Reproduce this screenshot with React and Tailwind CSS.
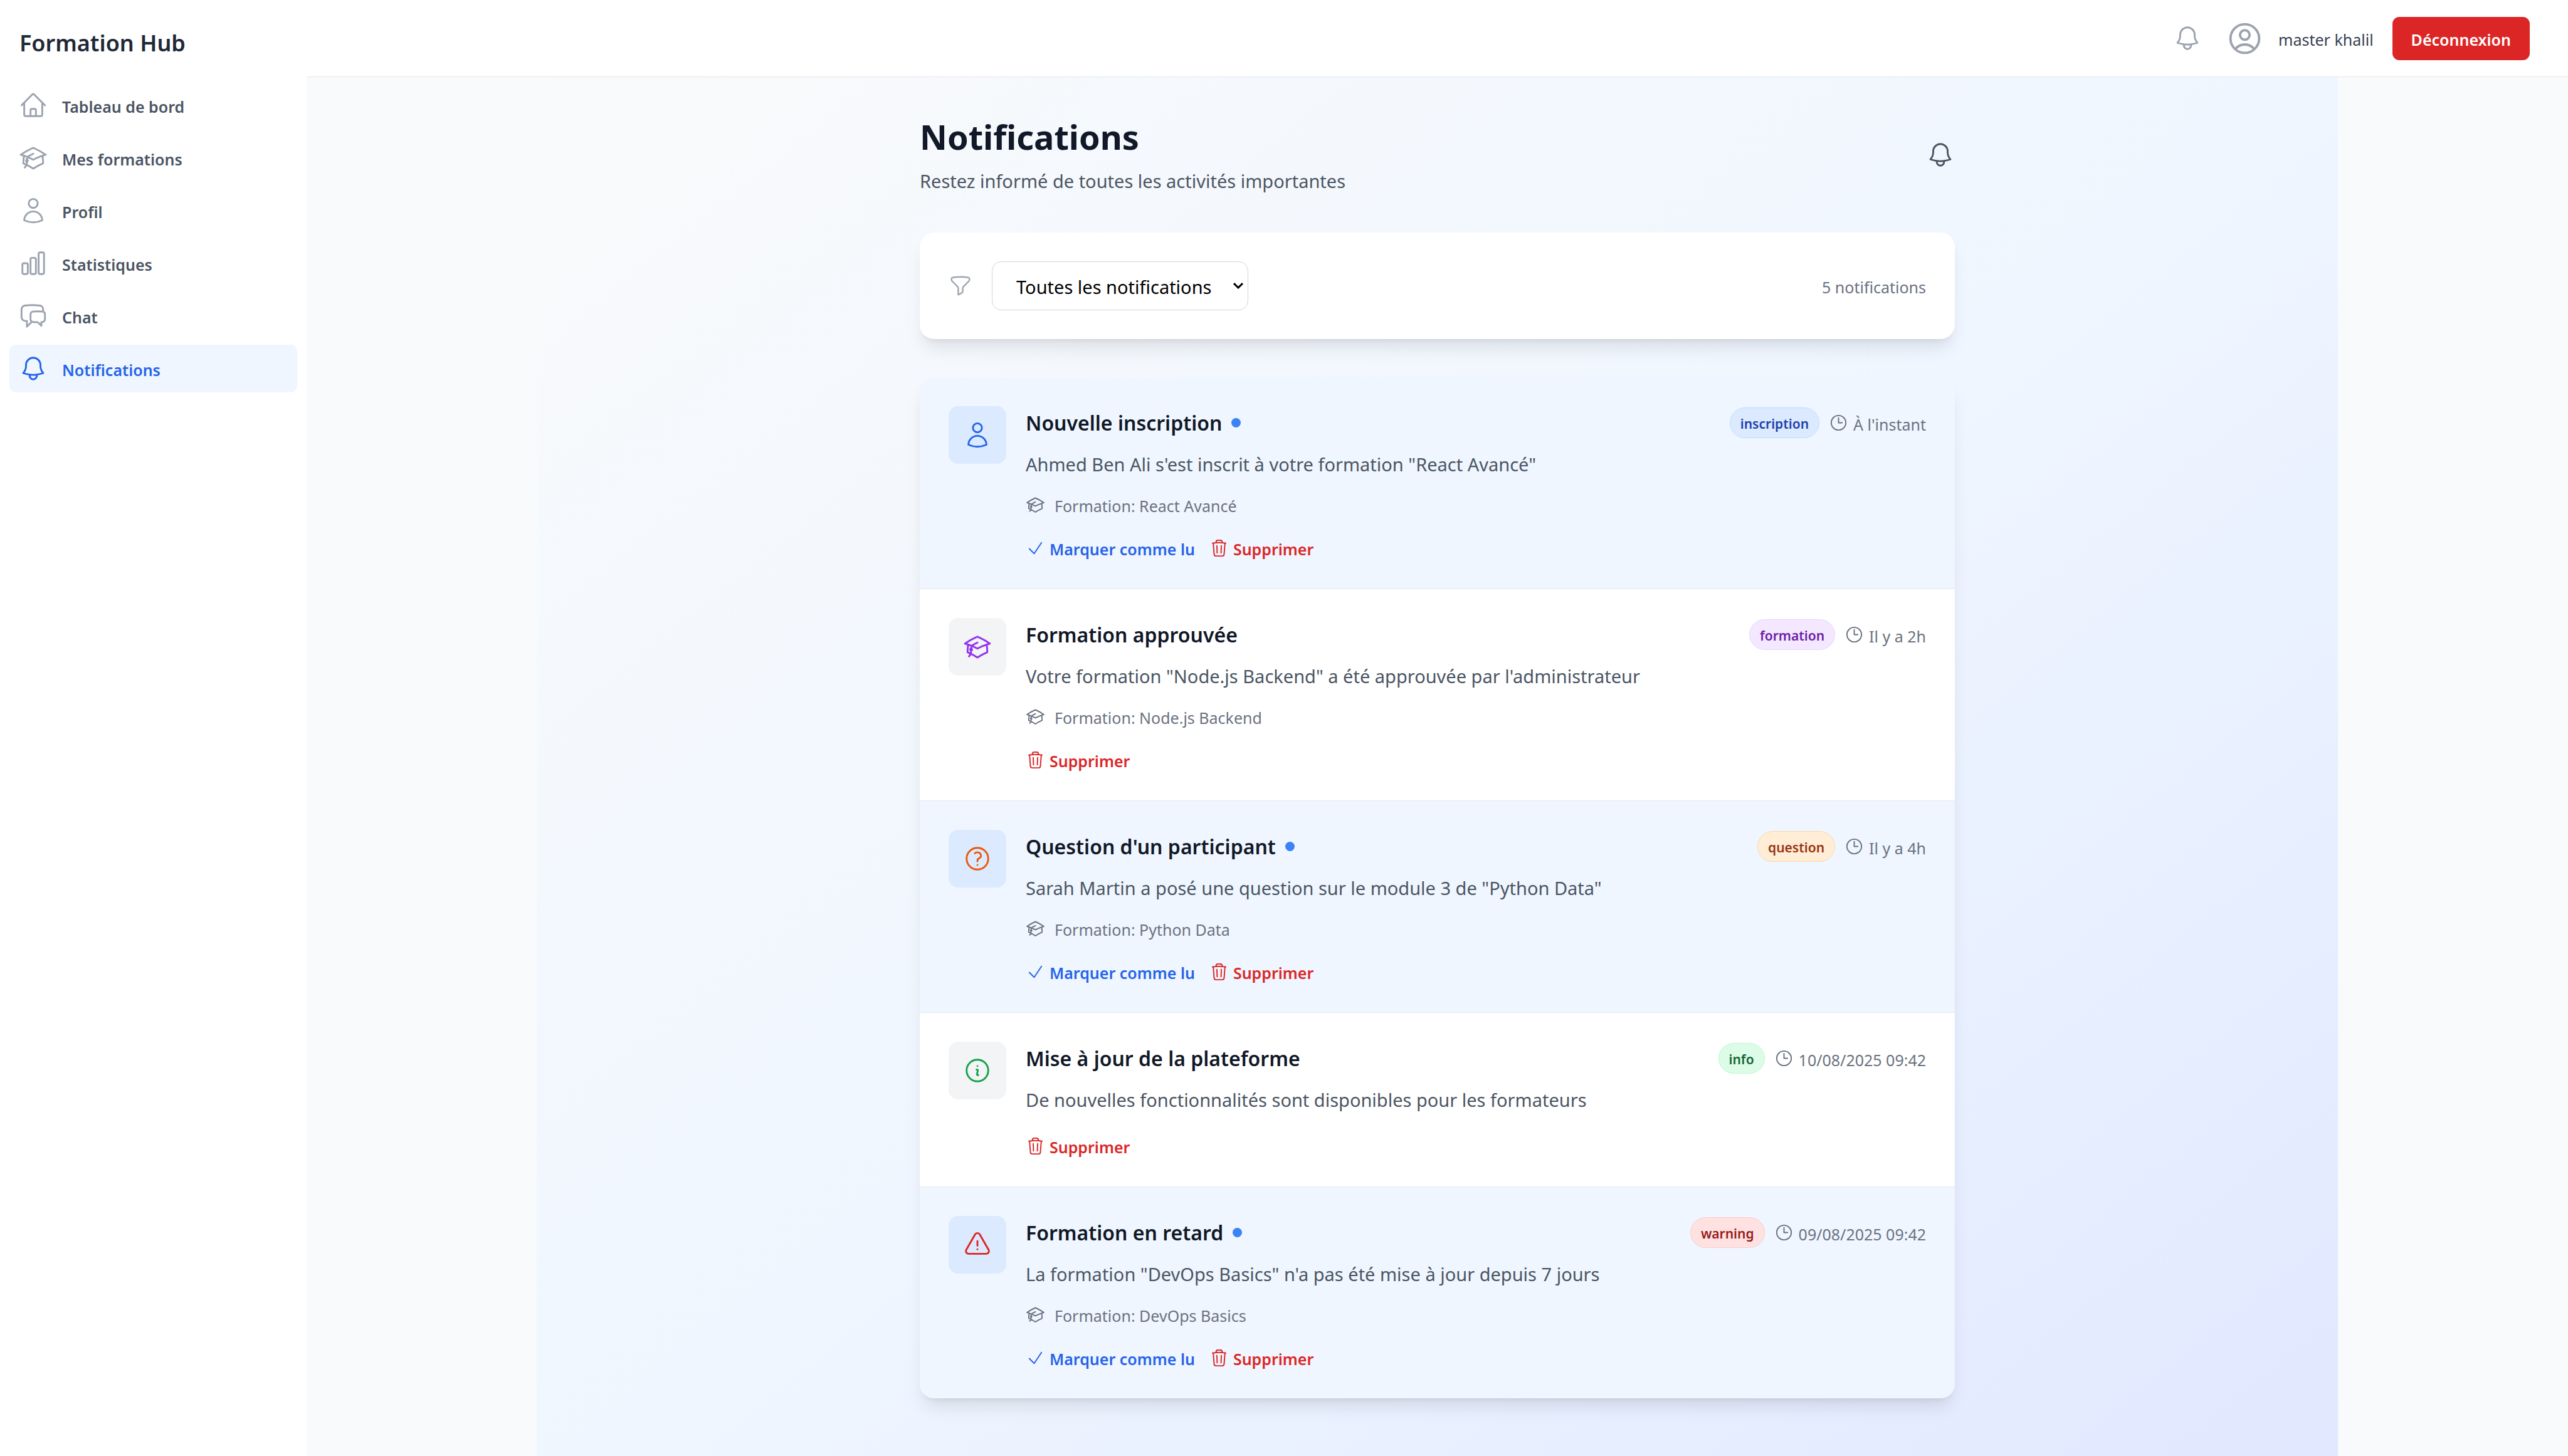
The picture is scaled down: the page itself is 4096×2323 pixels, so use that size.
import { useState } from "react";
import {
  HiOutlineHome,
  HiOutlineAcademicCap,
  HiOutlineUser,
  HiOutlineChartBar,
  HiOutlineChatBubbleLeftRight,
  HiOutlineBell,
  HiOutlineUserCircle,
  HiOutlineFunnel,
  HiOutlineClock,
  HiOutlineCheck,
  HiOutlineTrash,
  HiOutlineQuestionMarkCircle,
  HiOutlineInformationCircle,
  HiOutlineExclamationTriangle,
} from "react-icons/hi2";

const NAV = [
  { label: "Tableau de bord", Icon: HiOutlineHome },
  { label: "Mes formations", Icon: HiOutlineAcademicCap },
  { label: "Profil", Icon: HiOutlineUser },
  { label: "Statistiques", Icon: HiOutlineChartBar },
  { label: "Chat", Icon: HiOutlineChatBubbleLeftRight },
  { label: "Notifications", Icon: HiOutlineBell, active: true },
];

const ITEMS = [
  {
    title: "Nouvelle inscription",
    message: 'Ahmed Ben Ali s\'est inscrit à votre formation "React Avancé"',
    formation: "React Avancé",
    type: "inscription",
    badge: "bg-[#dbeafe] border-[#bfdbfe] text-[#1e40af]",
    time: "À l'instant",
    unread: true,
    Icon: HiOutlineUser,
    color: "text-[#2563eb]",
  },
  {
    title: "Formation approuvée",
    message: 'Votre formation "Node.js Backend" a été approuvée par l\'administrateur',
    formation: "Node.js Backend",
    type: "formation",
    badge: "bg-[#f3e8ff] border-[#e9d5ff] text-[#6b21a8]",
    time: "Il y a 2h",
    unread: false,
    Icon: HiOutlineAcademicCap,
    color: "text-[#9333ea]",
  },
  {
    title: "Question d'un participant",
    message: 'Sarah Martin a posé une question sur le module 3 de "Python Data"',
    formation: "Python Data",
    type: "question",
    badge: "bg-[#ffedd5] border-[#fed7aa] text-[#9a3412]",
    time: "Il y a 4h",
    unread: true,
    Icon: HiOutlineQuestionMarkCircle,
    color: "text-[#ea580c]",
  },
  {
    title: "Mise à jour de la plateforme",
    message: "De nouvelles fonctionnalités sont disponibles pour les formateurs",
    formation: null,
    type: "info",
    badge: "bg-[#dcfce7] border-[#bbf7d0] text-[#166534]",
    time: "10/08/2025 09:42",
    unread: false,
    Icon: HiOutlineInformationCircle,
    color: "text-[#16a34a]",
  },
  {
    title: "Formation en retard",
    message: 'La formation "DevOps Basics" n\'a pas été mise à jour depuis 7 jours',
    formation: "DevOps Basics",
    type: "warning",
    badge: "bg-[#fee2e2] border-[#fecaca] text-[#991b1b]",
    time: "09/08/2025 09:42",
    unread: true,
    Icon: HiOutlineExclamationTriangle,
    color: "text-[#dc2626]",
  },
];

const CARD_SHADOW = "shadow-[0_19px_29px_-6px_rgba(0,0,0,0.1),0_8px_11px_-8px_rgba(0,0,0,0.1)]";

/* Small text that stands beside an icon or inside a control. */
function Label({ children, className = "" }) {
  return <span className={`block pt-1 text-[25px] leading-[34px] ${className}`}>{children}</span>;
}

function Sidebar() {
  return (
    <aside className="w-[489px] shrink-0 bg-white">
      <div className="flex h-[130px] items-center px-[31px] pt-2">
        <span className="text-[36px] leading-[50px] font-semibold text-[#1f2937]">Formation Hub</span>
      </div>
      <nav className="flex flex-col gap-2 px-[15px]">
        {NAV.map(({ label, Icon, active }) => (
          <a
            key={label}
            href="#"
            className={`flex h-[76px] items-center gap-[23px] rounded-[11px] px-[15px] font-semibold ${
              active ? "bg-[#eff6ff] text-[#2563eb]" : "text-[#4b5563]"
            }`}
          >
            <Icon className={`size-[46px] shrink-0 ${active ? "text-[#2563eb]" : "text-[#9ca3af]"}`} />
            <Label>{label}</Label>
          </a>
        ))}
      </nav>
    </aside>
  );
}

function Header() {
  return (
    <header className="flex h-[123px] shrink-0 items-center justify-end border-b border-[#e5e7eb] bg-white pr-[61px]">
      <button type="button" aria-label="Notifications" className="mr-[38px] text-[#9ca3af]">
        <HiOutlineBell className="size-[46px]" />
      </button>
      <HiOutlineUserCircle className="mr-[23px] size-[61px] text-[#9ca3af]" />
      <Label className="mr-[30px] text-[#374151]">master khalil</Label>
      <button type="button" className="h-[69px] rounded-[11px] bg-[#dc2626] px-[30px] font-semibold text-white">
        <Label>Déconnexion</Label>
      </button>
    </header>
  );
}

function FilterCard() {
  const [filter, setFilter] = useState("all");
  return (
    <section className={`flex items-center justify-between rounded-[23px] bg-white p-[46px] ${CARD_SHADOW}`}>
      <div className="flex items-center gap-[31px]">
        <HiOutlineFunnel className="size-[38px] text-[#9ca3af]" />
        <div className="relative">
          <select
            aria-label="Filtrer les notifications"
            value={filter}
            onChange={(e) => setFilter(e.target.value)}
            className="h-[78px] w-[409px] appearance-none rounded-[15px] border border-[#d1d5db] bg-white pt-1 pl-[38px] text-[29px] text-black"
          >
            <option value="all">Toutes les notifications</option>
            <option value="unread">Non lues</option>
            <option value="read">Lues</option>
          </select>
          <svg
            viewBox="0 0 16 10"
            className="pointer-events-none absolute top-[34px] right-2 h-[10px] w-4"
            fill="none"
            stroke="black"
            strokeWidth="3"
          >
            <path d="M1 1.200 8 8l7-6.800" />
          </svg>
        </div>
      </div>
      <Label className="text-[#6b7280]">{ITEMS.length} notifications</Label>
    </section>
  );
}

function NotificationItem({ item }) {
  const { title, message, formation, type, badge, time, unread, Icon, color } = item;
  return (
    <li
      className={`flex items-start gap-[31px] border-b border-[#e5e7eb] p-[46px] last:border-b-0 ${
        unread ? "bg-[#eff6ff]" : "bg-white"
      }`}
    >
      <div className={`rounded-[15px] p-[23px] ${unread ? "bg-[#dbeafe]" : "bg-[#f3f4f6]"}`}>
        <Icon className={`size-[46px] ${color}`} />
      </div>
      <div className="min-w-0 flex-1">
        <div className="flex h-[53px] items-center justify-between">
          <h3 className="flex items-center gap-[15px] text-[32px] leading-[53px] font-semibold text-[#111827]">
            {title}
            {unread && <span className="size-[15px] rounded-full bg-[#3b82f6]" />}
          </h3>
          <div className="flex items-center gap-[15px]">
            <span className={`rounded-full border px-4 pt-1 text-[21px] leading-[43px] font-semibold ${badge}`}>
              {type}
            </span>
            <span className="flex items-center gap-2 text-[#6b7280]">
              <HiOutlineClock className="size-[31px]" />
              <Label>{time}</Label>
            </span>
          </div>
        </div>
        <p className="mt-[17px] text-[29px] leading-[46px] text-[#4b5563]">{message}</p>
        {formation && (
          <p className="mt-[22px] flex items-center gap-[15px] text-[#6b7280]">
            <HiOutlineAcademicCap className="size-[31px]" />
            <Label>Formation: {formation}</Label>
          </p>
        )}
        <div className="mt-[31px] flex gap-[23px] font-semibold">
          {unread && (
            <button type="button" className="flex items-center gap-[7px] text-[#2563eb]">
              <HiOutlineCheck className="size-[31px]" />
              <Label>Marquer comme lu</Label>
            </button>
          )}
          <button type="button" className="flex items-center gap-[7px] text-[#dc2626]">
            <HiOutlineTrash className="size-[31px]" />
            <Label>Supprimer</Label>
          </button>
        </div>
      </div>
    </li>
  );
}

export default function App() {
  return (
    <div className="flex h-screen overflow-hidden bg-[#f9fafb] font-['Noto_Sans','Open_Sans',sans-serif]">
      <Sidebar />
      <div className="flex min-w-0 flex-1 flex-col">
        <Header />
        <main className="flex-1 overflow-hidden">
          <div className="mx-auto min-h-screen max-w-[2873px] bg-linear-to-br/srgb from-[#f9fafb] via-[#eff6ff] to-[#e0e7ff]">
            <div className="mx-auto flex max-w-[1651px] flex-col gap-[61px] pt-[61px]">
              <div className="flex items-center justify-between">
                <div>
                  <h1 className="text-[54px] leading-[69px] font-bold text-[#111827]">Notifications</h1>
                  <p className="mt-[15px] text-[29px] leading-[42px] text-[#4b5563]">
                    Restez informé de toutes les activités importantes
                  </p>
                </div>
                <button type="button" aria-label="Alertes" className="text-[#4b5563]">
                  <HiOutlineBell className="size-[46px]" />
                </button>
              </div>
              <FilterCard />
              <ul className={`overflow-hidden rounded-[23px] bg-white ${CARD_SHADOW}`}>
                {ITEMS.map((item) => (
                  <NotificationItem key={item.title} item={item} />
                ))}
              </ul>
            </div>
          </div>
        </main>
      </div>
    </div>
  );
}
